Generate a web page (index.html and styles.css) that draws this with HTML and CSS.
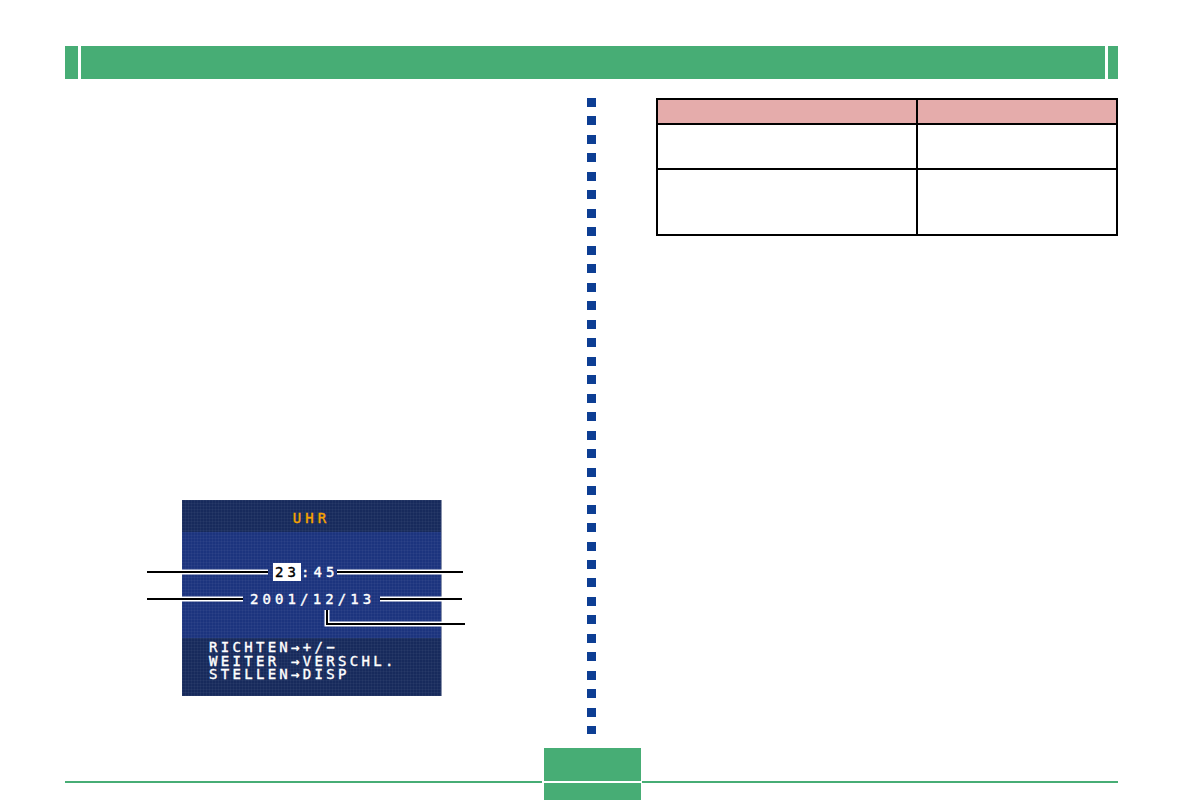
FILE: index.html
```html
<!DOCTYPE html>
<html>
<head>
<meta charset="utf-8">
<title>Uhr einstellen</title>
<link rel="stylesheet" href="styles.css">
</head>
<body>
<div class="page">
    <div class="topbar">
        <span class="tab-l"></span>
        <span class="tab-main"></span>
        <span class="tab-r"></span>
    </div>

    <div class="main">
        <div class="col-left">
            <div class="figure">
                <div class="lcd">
                    <div class="lcd-title">UHR</div>
                    <div class="lcd-body">
                        <div class="lcd-time"><span class="sel">23</span>:45</div>
                        <div class="lcd-date">2001/12/13</div>
                    </div>
                    <div class="lcd-help">RICHTEN→+/−
WEITER →VERSCHL.
STELLEN→DISP</div>
                </div>
                <!-- callout lines over the screen -->
                <svg class="callouts" width="330" height="196" viewBox="0 0 330 196">
                    <g fill="none" stroke="#fff" stroke-width="5">
                        <path d="M42 72H128"/>
                        <path d="M197 72H302"/>
                        <path d="M42 99H103"/>
                        <path d="M240 99H302"/>
                        <path d="M187 110V124H302"/>
                    </g>
                    <g fill="none" stroke="#000" stroke-width="2">
                        <path d="M7 72H128"/>
                        <path d="M197 72H323"/>
                        <path d="M7 99H103"/>
                        <path d="M240 99H322"/>
                        <path d="M187 110V124H325"/>
                    </g>
                </svg>
            </div>
        </div>

        <div class="dots"></div>

        <div class="col-right">
            <div class="spec">
                <div class="cell head"></div>
                <div class="cell head"></div>
                <div class="cell row1"></div>
                <div class="cell row1"></div>
                <div class="cell row2"></div>
                <div class="cell row2"></div>
            </div>
        </div>
    </div>

    <div class="footer">
        <span class="foot-line left"></span>
        <span class="foot-tab"></span>
        <span class="foot-line right"></span>
    </div>
</div>
</body>
</html>
```

FILE: styles.css
```css
body {
    margin: 0;
    background: #fff;
    font-family: "Liberation Sans", Arial, sans-serif;
    overflow: hidden;
}

.page {
    width: 1183px;
    height: 800px;
    padding: 46px 65px 0 65px;
    box-sizing: border-box;
}

/* green bar at the top */
.topbar {
    display: flex;
    height: 33px;
}
.topbar span {
    display: block;
    background: #47ad75;
}
.tab-l {
    width: 13px;
    margin-right: 3px;
}
.tab-main {
    flex: 1;
}
.tab-r {
    width: 10px;
    margin-left: 3px;
}

.main {
    display: flex;
    height: 650px;
    margin-top: 19px;
}

.col-left {
    width: 522px;
}

.figure {
    position: relative;
    width: 330px;
    height: 196px;
    margin: 402px 0 0 75px;
}

/* camera screen */
.lcd {
    width: 260px;
    height: 196px;
    margin-left: 42px;
    font-family: "DejaVu Sans Mono", monospace;
    font-size: 14px;
    color: #fff;
    -webkit-text-stroke: 0.4px currentColor;
    background-color: #172a5c;
    background-image:
        linear-gradient(rgba(255,255,255,0.035) 1px, transparent 1px),
        linear-gradient(90deg, rgba(255,255,255,0.035) 1px, transparent 1px);
    background-size: 3px 3px;
    border-right: 1px solid #8a93ad;
    box-sizing: border-box;
}
.lcd-title {
    height: 32px;
    line-height: 36px;
    text-align: center;
    color: #f7a400;
    letter-spacing: 4px;
}
.lcd-body {
    height: 106px;
    padding-top: 32px;
    box-sizing: border-box;
    background-color: #1c347e;
    background-image:
        linear-gradient(rgba(255,255,255,0.035) 1px, transparent 1px),
        linear-gradient(90deg, rgba(255,255,255,0.035) 1px, transparent 1px);
    background-size: 3px 3px;
}
.lcd-time,
.lcd-date {
    height: 16px;
    line-height: 16px;
    letter-spacing: 4.1px;
}
.lcd-time {
    padding-left: 91px;
}
.lcd-date {
    margin-top: 11px;
    padding-left: 68px;
}
.sel {
    background: #fff;
    color: #000;
    padding: 1px 1px 1px 2px;
}
.lcd-help {
    height: 58px;
    padding: 3px 0 0 27px;
    box-sizing: border-box;
    line-height: 13.5px;
    letter-spacing: 3.3px;
    white-space: pre;
}

.callouts {
    position: absolute;
    left: 0;
    top: 0;
}

/* column of blue squares */
.dots {
    width: 9px;
    height: 636px;
    background: repeating-linear-gradient(to bottom, #0d3e94 0 9px, transparent 9px 18.48px);
}

.col-right {
    margin-left: 60px;
    width: 462px;
}

.spec {
    display: grid;
    grid-template-columns: 260px 200px;
    border-top: 2px solid #000;
    border-left: 2px solid #000;
}
.cell {
    border-right: 2px solid #000;
    border-bottom: 2px solid #000;
    box-sizing: border-box;
}
.head {
    height: 25px;
    background: #e5acab;
}
.row1 {
    height: 45px;
}
.row2 {
    height: 66px;
}

/* bottom line with page tab */
.footer {
    display: flex;
    height: 52px;
}
.foot-line {
    height: 2px;
    margin-top: 33px;
    background: #47ad75;
}
.foot-line.left {
    width: 477px;
}
.foot-line.right {
    flex: 1;
    margin-left: 1px;
}
.foot-tab {
    width: 97px;
    margin-left: 2px;
    background: linear-gradient(to bottom, #47ad75 0 33px, #fff 33px 35px, #47ad75 35px);
}
```
